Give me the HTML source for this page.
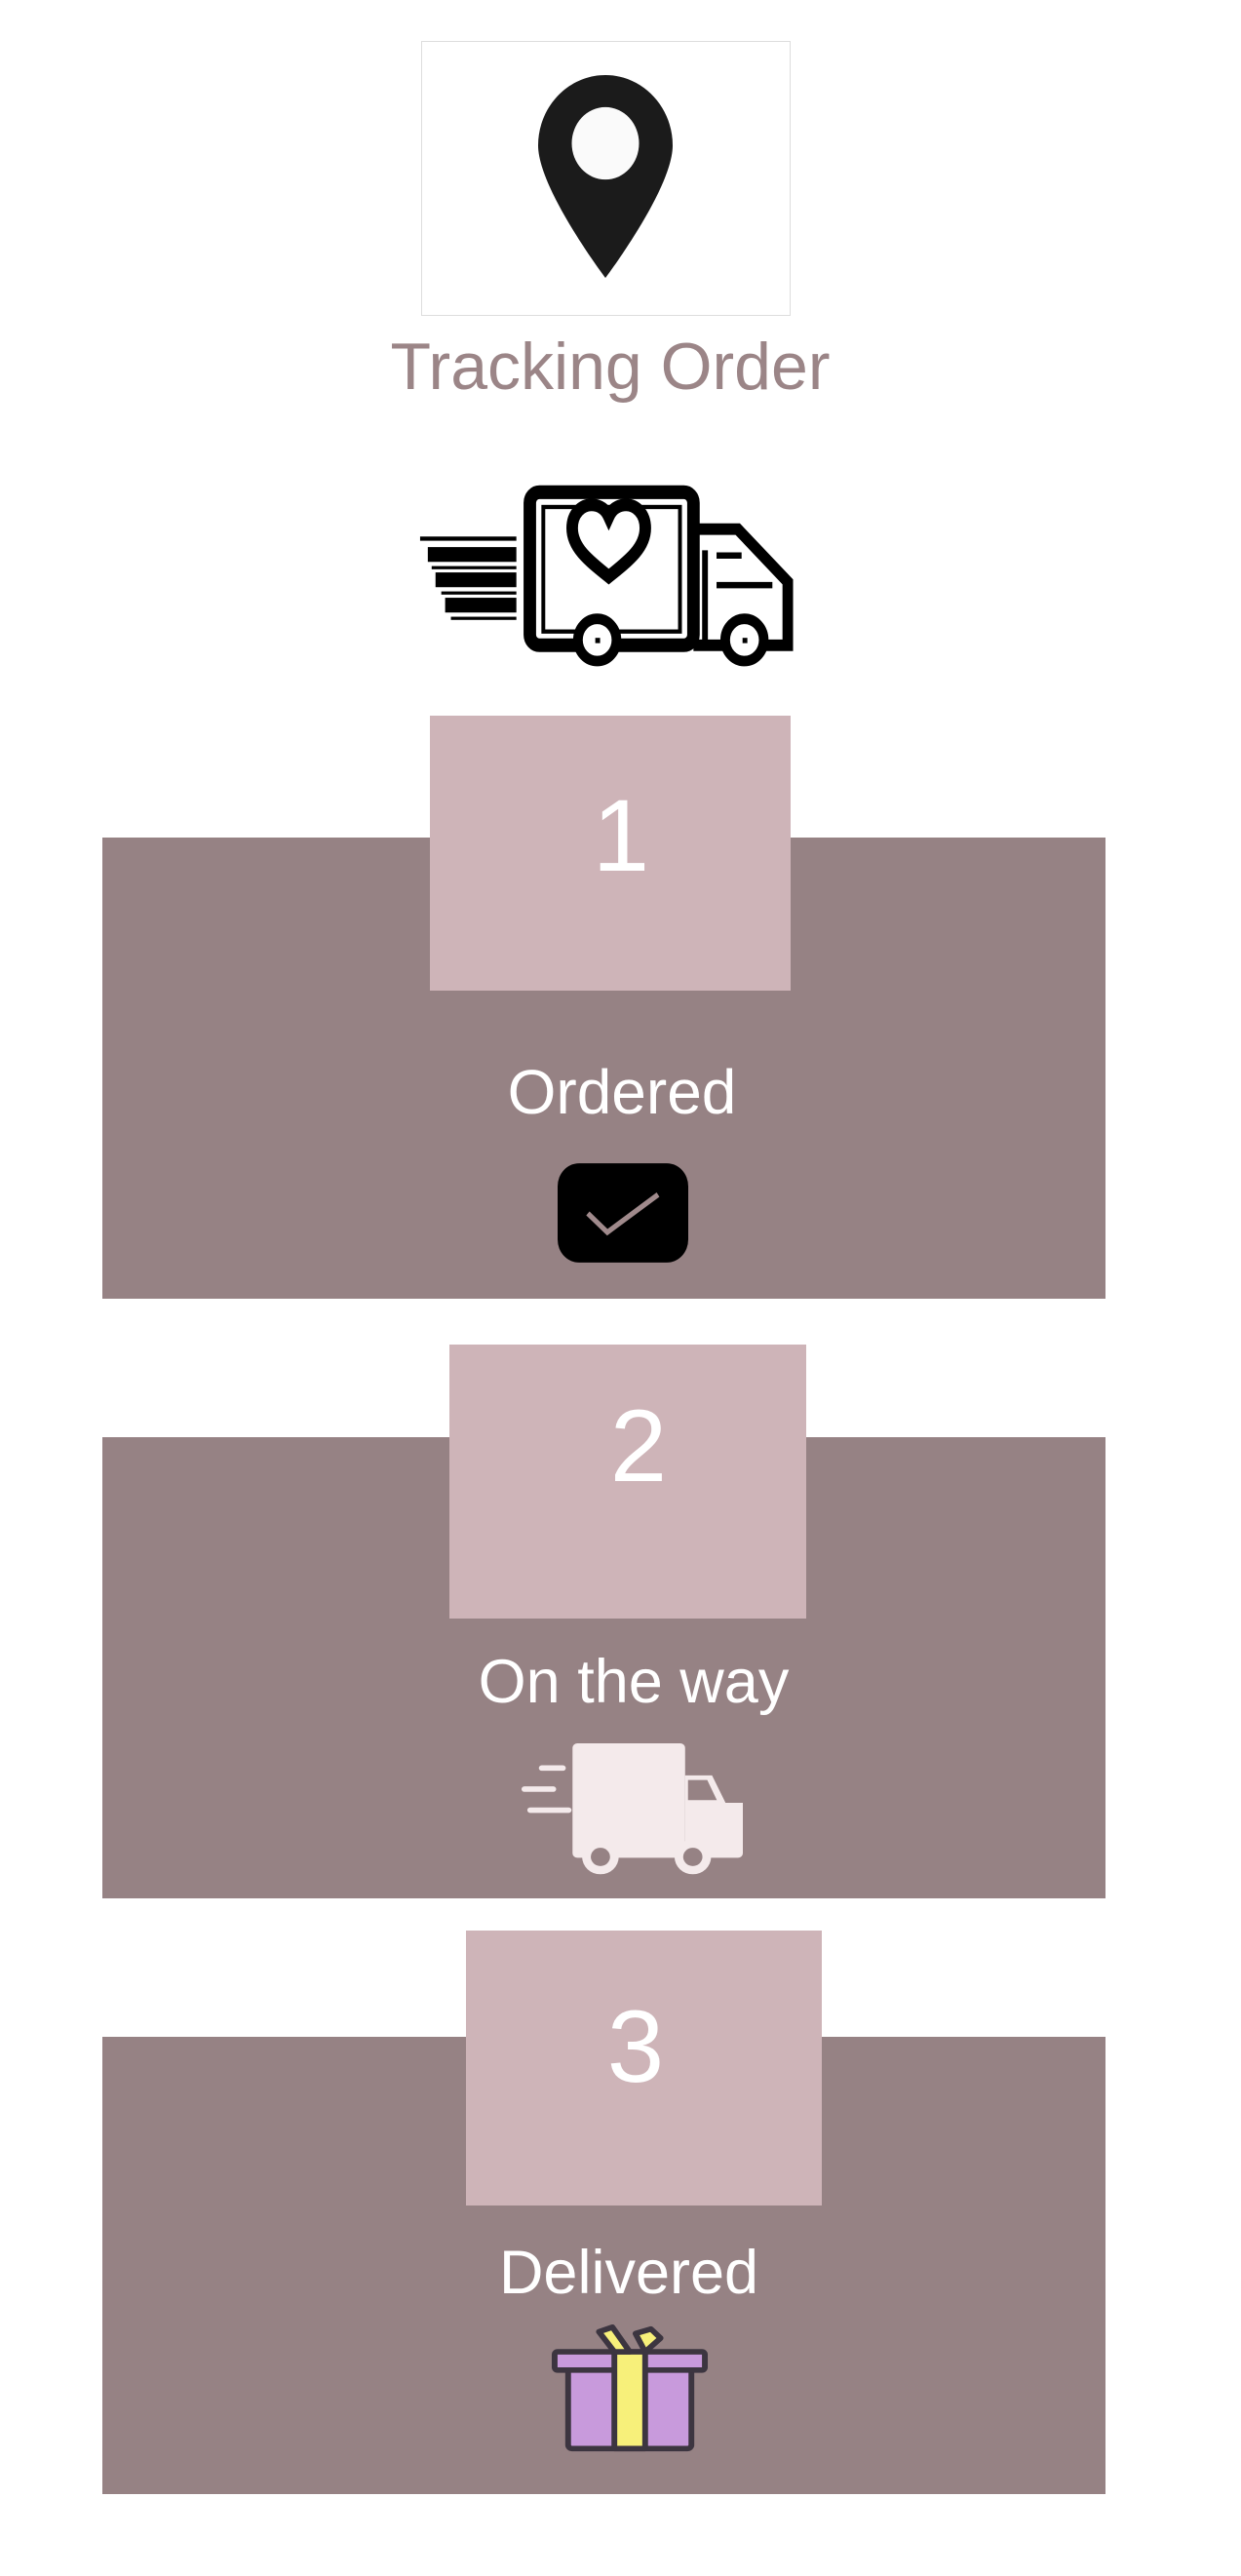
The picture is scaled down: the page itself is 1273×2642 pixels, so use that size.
<!DOCTYPE html>
<html><head><meta charset="utf-8"><style>
html,body{margin:0;padding:0;background:#fff;}
body{width:1273px;height:2642px;position:relative;overflow:hidden;font-family:"Liberation Sans",sans-serif;}
.a{position:absolute;}
.dark{background:#968284;left:105px;width:1029px;}
.light{background:#ceb4b8;}
.t{color:#fff;text-align:center;white-space:nowrap;line-height:1;width:400px;}
</style></head><body>
<div class="a" style="left:432px;top:42px;width:379px;height:282px;border:1px solid #ddd;box-sizing:border-box;background:#fff"></div>
<svg class="a" style="left:552px;top:77px" width="138" height="208" viewBox="0 0 140 196" preserveAspectRatio="none">
<path d="M70 0C31 0 0 31 0 68c0 42 70 128 70 128s70-86 70-128C140 31 109 0 70 0z" fill="#1b1b1b"/>
<circle cx="70" cy="66" r="35" fill="#fafafa"/>
</svg>
<div class="a" style="left:326px;top:342px;width:600px;text-align:center;font-size:68px;line-height:1;color:#9b8587;white-space:nowrap">Tracking Order</div>

<svg class="a" style="left:427px;top:494px" width="388" height="197" viewBox="0 0 393 182" preserveAspectRatio="none">
<g fill="none" stroke="#000">
<rect x="118" y="10" width="170" height="145" rx="10" stroke-width="13"/>
<rect x="132" y="24" width="142" height="118" stroke-width="4"/>
<path d="M294 45h40l52 50v60h-98" stroke-width="11"/>
<path d="M300 65v90M312 70h26M312 98h58" stroke-width="6"/>
<path d="M200 90c-22-16-38-28-38-46 0-14 10-22 20-22 9 0 15 5 18 11 3-6 9-11 18-11 10 0 20 8 20 22 0 18-16 30-38 46z" stroke-width="12"/>
<circle cx="188" cy="150" r="20" stroke-width="10" fill="#fff"/>
<circle cx="341" cy="150" r="20" stroke-width="10" fill="#fff"/>
</g>
<g fill="#000">
<rect x="12" y="62" width="92" height="14"/><rect x="20" y="86" width="84" height="14"/><rect x="30" y="110" width="74" height="14"/>
<rect x="4" y="52" width="100" height="4"/><rect x="16" y="80" width="88" height="3"/><rect x="26" y="104" width="78" height="3"/><rect x="36" y="128" width="68" height="3"/>
<rect x="186" y="148" width="5" height="5"/><rect x="339" y="148" width="5" height="5"/>
</g>
</svg>

<div class="a dark" style="top:859px;height:473px"></div>
<div class="a light" style="left:441px;top:734px;width:370px;height:282px"></div>
<div class="a t" style="left:437px;top:805px;font-size:105px">1</div>
<div class="a t" style="left:438px;top:1088px;font-size:64px">Ordered</div>
<svg class="a" style="left:570px;top:1191px" width="138" height="106" viewBox="0 0 138 99" preserveAspectRatio="none">
<rect x="2" y="2" width="134" height="95" rx="22" fill="#000"/>
<path d="M33 50l20 18 52-36" fill="none" stroke="#a08a8c" stroke-width="5"/>
</svg>

<div class="a dark" style="top:1474px;height:473px"></div>
<div class="a light" style="left:461px;top:1379px;width:366px;height:281px"></div>
<div class="a t" style="left:455px;top:1431px;font-size:105px">2</div>
<div class="a t" style="left:450px;top:1694px;font-size:63px">On the way</div>
<svg class="a" style="left:533px;top:1788px" width="229" height="139" viewBox="0 0 232 148" preserveAspectRatio="none">
<g fill="#f4eaeb">
<rect x="55" y="0" width="117" height="125" rx="5"/>
<path d="M172 35h28l14 30h18v55a5 5 0 0 1-5 5h-55z"/>
<circle cx="84" cy="124" r="19"/><circle cx="180" cy="124" r="19"/>
<rect x="20" y="24" width="28" height="6" rx="3"/><rect x="2" y="47" width="36" height="6" rx="3"/><rect x="8" y="70" width="46" height="6" rx="3"/>
</g>
<path d="M175 40h20l10 22h-30z" fill="#968284"/>
<circle cx="84" cy="124" r="10" fill="#968284"/><circle cx="180" cy="124" r="10" fill="#968284"/>
</svg>

<div class="a dark" style="top:2089px;height:469px"></div>
<div class="a light" style="left:478px;top:1980px;width:365px;height:282px"></div>
<div class="a t" style="left:452px;top:2047px;font-size:105px">3</div>
<div class="a t" style="left:445px;top:2300px;font-size:63px">Delivered</div>
<svg class="a" style="left:565px;top:2384px" width="162" height="131" viewBox="0 0 164 140" preserveAspectRatio="none">
<g stroke="#3c3540" stroke-width="6" stroke-linejoin="round">
<rect x="18" y="48" width="128" height="88" rx="4" fill="#c89adc"/>
<rect x="4" y="30" width="156" height="20" rx="3" fill="#c89adc"/>
<rect x="66" y="30" width="32" height="106" fill="#f7f07a"/>
<path d="M66 30L50 8l14-5 18 27zM98 30l-10-20 16-5 10 10z" fill="#f7f07a"/>
</g>
</svg>
</body></html>
